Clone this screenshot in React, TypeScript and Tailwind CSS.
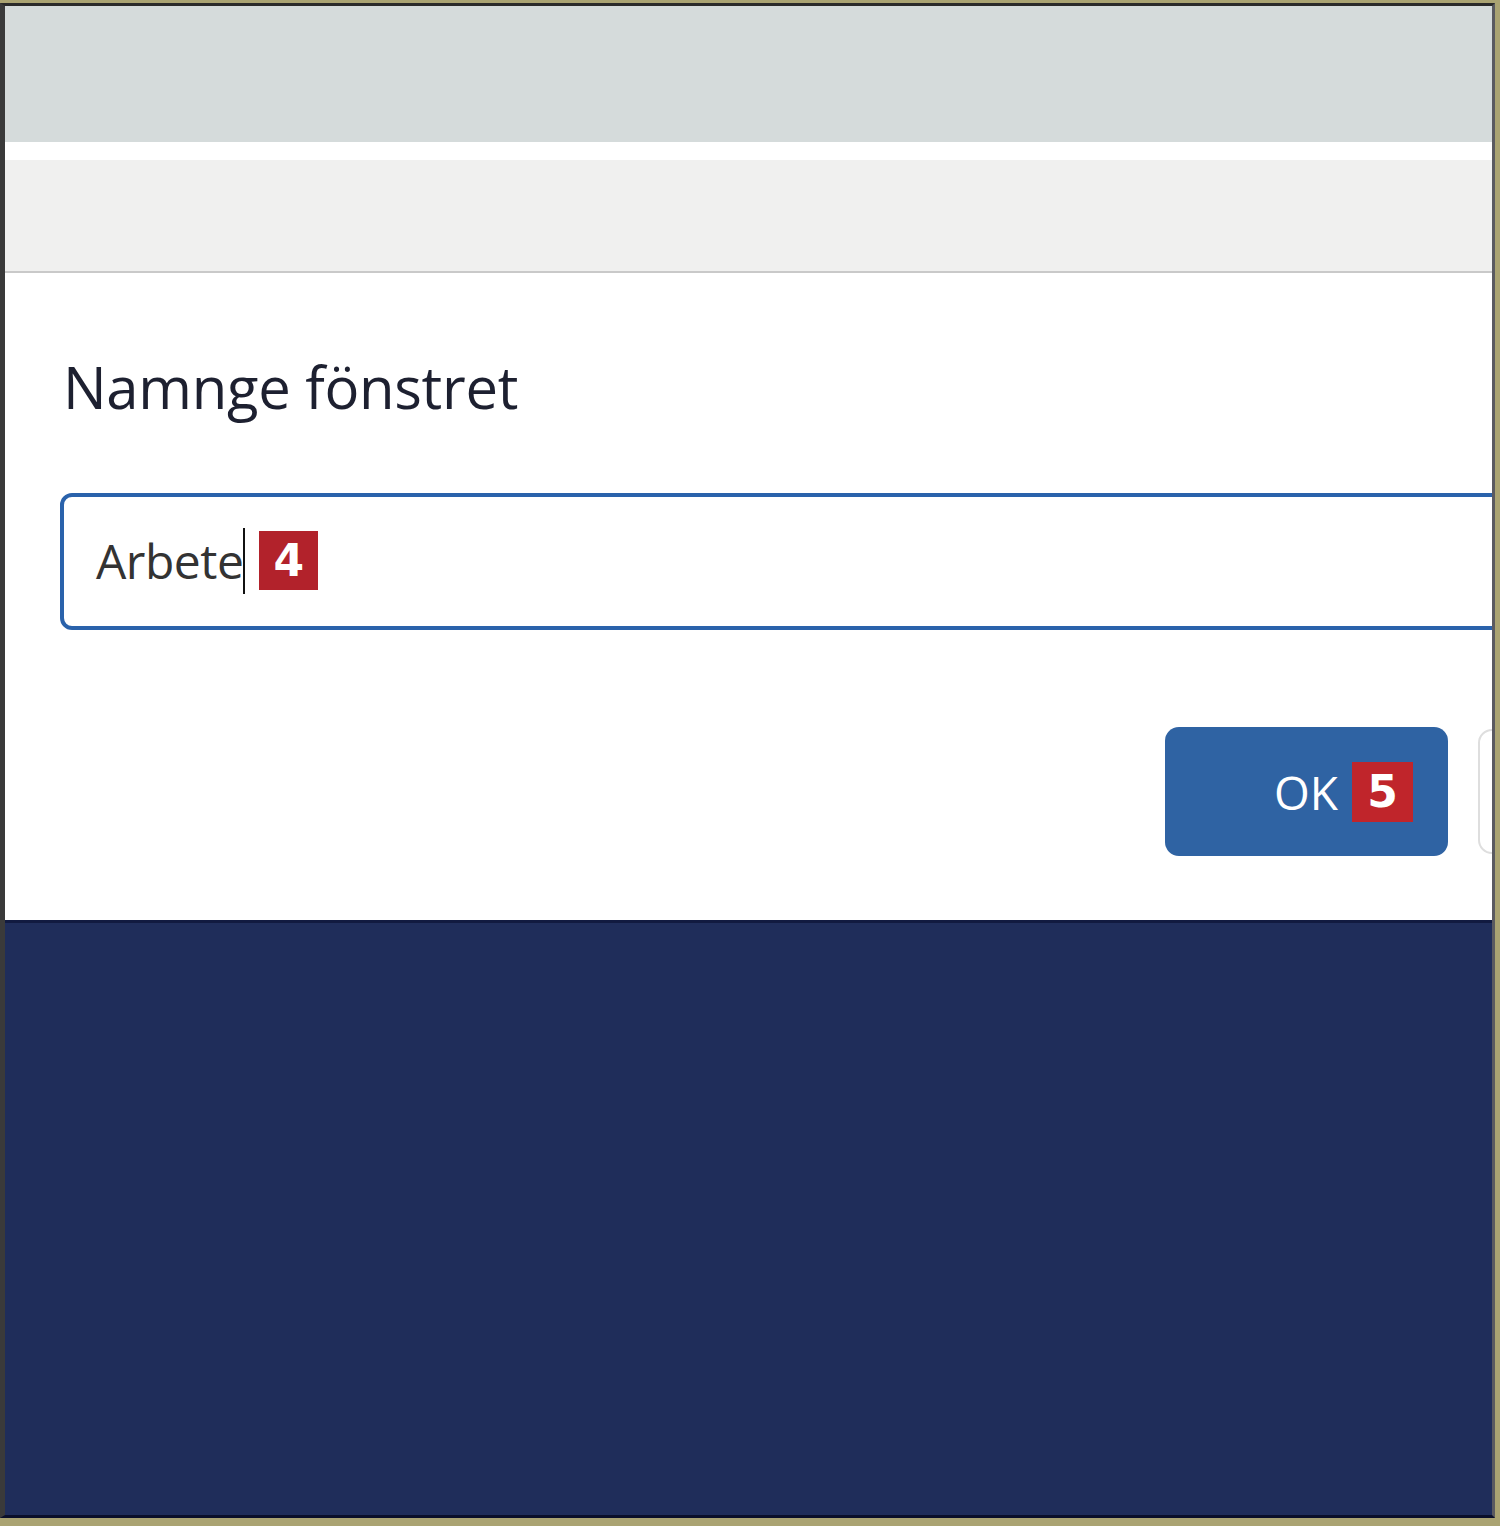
import React from "react";

export default function App() {
  const font = { fontFamily: '"Open Sans", "Noto Sans", "Liberation Sans", sans-serif' };
  const badgeFont = { fontFamily: '"DejaVu Sans", "Liberation Sans", Arial, sans-serif' };
  return (
    <div className="w-[1500px] h-[1526px] bg-[#aaa372] pt-[3px] pr-[5px] pb-[8px] flex" style={font}>
      <div className="flex-1 flex flex-col border-l-[5px] border-l-[#3a3a3a] border-t-[3px] border-t-[#2a2a2a] border-r-[3px] border-r-[#5a5a60] border-b-[3px] border-b-[#0a0f2a] overflow-hidden">
        <div className="h-[136px] bg-[#d5dbdb] shrink-0" />
        <div className="h-[18px] bg-white shrink-0" />
        <div className="h-[113px] bg-[#f0f0ef] border-b-2 border-[#c9c9c9] shrink-0" />
        <div className="bg-white shrink-0 pt-[78px] pb-[64px] pl-[55px] overflow-hidden">
          <div className="text-[58px] leading-[72px] text-[#1d2030] pl-[3px] tracking-[-0.3px]">Namnge fönstret</div>
          <div className="mt-[70px] w-[1500px] h-[137px] border-[4px] border-[#2a62ab] rounded-[12px] flex items-center pl-[32px] pb-[2px]">
            <span className="text-[48px] leading-none text-[#333] tracking-[-0.5px]">Arbete</span>
            <span className="w-[2px] h-[66px] bg-[#111]" />
            <span className="ml-[14px] w-[59px] h-[59px] bg-[#b2222b] text-white font-bold text-[44px] leading-none flex items-center justify-center" style={badgeFont}>4</span>
          </div>
          <div className="mt-[97px] flex gap-[30px] pl-[1105px] w-[2000px]">
            <div className="w-[283px] h-[129px] bg-[#2f63a3] rounded-[14px] flex items-center justify-end pr-[35px] shrink-0">
              <span className="text-[46px] leading-none text-white">OK</span>
              <span className="ml-[14px] w-[61px] h-[60px] bg-[#c0252b] text-white font-bold text-[44px] leading-none flex items-center justify-center" style={badgeFont}>5</span>
            </div>
            <div className="w-[283px] h-[125px] mt-[2px] border-2 border-[#dedede] rounded-[14px] bg-white shrink-0" />
          </div>
        </div>
        <div className="flex-1 bg-[#1f2d5a] border-t-[3px] border-[#111a40]" />
      </div>
    </div>
  );
}
